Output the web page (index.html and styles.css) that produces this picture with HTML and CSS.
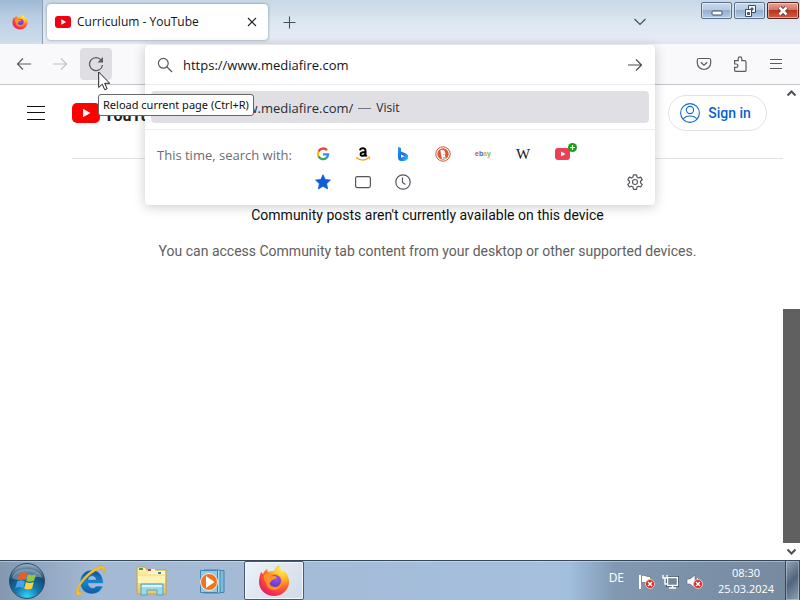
FILE: index.html
```html
<!DOCTYPE html>
<html lang="en">
<head>
<meta charset="utf-8">
<title>Curriculum - YouTube</title>
<link rel="stylesheet" href="styles.css">
</head>
<body>
<svg class="defs" aria-hidden="true">
  <defs>
    <radialGradient id="fire" cx=".75" cy=".15" r="1"><stop offset="0" stop-color="#fff04a"/><stop offset=".3" stop-color="#ffbc25"/><stop offset=".55" stop-color="#ff6b2c"/><stop offset=".8" stop-color="#f5304f"/><stop offset="1" stop-color="#d81d75"/></radialGradient>
    <radialGradient id="globe" cx=".6" cy=".3" r=".8"><stop offset="0" stop-color="#a04ff0"/><stop offset="1" stop-color="#5139c8"/></radialGradient>
    <radialGradient id="orb" cx=".5" cy=".95" r=".9"><stop offset="0" stop-color="#35d4f5"/><stop offset=".4" stop-color="#1275ac"/><stop offset=".75" stop-color="#174870"/><stop offset="1" stop-color="#8fa9bd"/></radialGradient>
    <linearGradient id="bing" x1="0" y1="0" x2="1" y2="1"><stop offset="0" stop-color="#2a9ff0"/><stop offset=".5" stop-color="#1a6fe0"/><stop offset="1" stop-color="#35d8ef"/></linearGradient>
    <linearGradient id="ie" x1="0" y1="0" x2="0" y2="1"><stop offset="0" stop-color="#164c93"/><stop offset=".5" stop-color="#1b83cd"/><stop offset="1" stop-color="#11589f"/></linearGradient>
    <linearGradient id="folder" x1="0" y1="0" x2="0" y2="1"><stop offset="0" stop-color="#fff3ad"/><stop offset="1" stop-color="#e8c962"/></linearGradient>
    <symbol id="firefox" viewBox="0 0 32 32">
      <path fill="url(#fire)" d="M3 7l2 2c1-2 2-4 4-5l1 3c2-1 4-1 6-1 1-3 3-5 5-6 0 3 2 4 4 6 1 0 2 1 3 2 2 3 3 6 3 9 0 8-7 14-15 14S1 25 1 17c0-4 1-7 2-10z"/>
      <circle cx="16" cy="17" r="8" fill="#ff8b25"/>
      <circle cx="17" cy="16" r="6" fill="url(#globe)"/>
      <path fill="#ff922b" d="M6 10c3-2 6-1 8 1 2 0 4 0 5 1-1 2-3 2-5 3-1 2-2 3-4 4-3-1-5-5-4-9z"/>
    </symbol>
    <symbol id="bad" viewBox="0 0 10 10"><circle cx="5" cy="5" r="4.5" fill="#d52a25" stroke="#f2c3bd"/><path d="M3 3l4 4M7 3L3 7" stroke="#fff" stroke-width="1.5"/></symbol>
  </defs>
</svg>

<header class="titlebar">
  <div class="pinned"><svg width="16" height="16"><use href="#firefox"/></svg></div>
  <div class="tab">
    <svg width="16" height="16" viewBox="0 0 16 16"><rect y="2" width="16" height="12" rx="3" fill="#f00013"/><path d="M6.3 5.2l4.8 2.8-4.8 2.8z" fill="#fff"/></svg>
    <span class="tab-title">Curriculum - YouTube</span>
    <button class="plain close-tab" aria-label="Close tab"><svg width="16" height="16" viewBox="0 0 16 16"><path d="M4 4l8 8M12 4l-8 8" stroke="#222" stroke-width="1.1"/></svg></button>
  </div>
  <button class="plain" aria-label="New tab"><svg width="16" height="16" viewBox="0 0 16 16"><path d="M8.500 2.500v12M2.500 8.500h12" stroke="#45505c" stroke-width="1.1"/></svg></button>
  <button class="plain all-tabs" aria-label="List all tabs"><svg width="16" height="16" viewBox="0 0 16 16"><path d="M2.500 5l5.500 5.500L13.500 5" fill="none" stroke="#45505c" stroke-width="1.2"/></svg></button>
  <div class="window-buttons">
    <button aria-label="Minimize"><svg width="16" height="14" viewBox="0 0 16 14"><rect x="3" y="7" width="10" height="4" rx="1" fill="#fff" stroke="#3b4c66"/></svg></button>
    <button aria-label="Restore"><svg width="16" height="14" viewBox="0 0 16 14"><path d="M6.500 1.500h7v7h-7z" fill="#fff" stroke="#3b4c66"/><path d="M9 4h2v2H9z" fill="#7893b5" stroke="#3b4c66"/><path d="M3.500 5.500h6v7h-6z" fill="#fff" stroke="#3b4c66"/><path d="M5.500 8.500h2v2h-2z" fill="#7893b5" stroke="#3b4c66"/></svg></button>
    <button class="win-close" aria-label="Close"><svg width="16" height="14" viewBox="0 0 16 14"><path d="M4.500 3.500l7 7M11.500 3.500l-7 7" stroke="#5d332f" stroke-width="4.500"/><path d="M4.500 3.500l7 7M11.500 3.500l-7 7" stroke="#fff" stroke-width="2.600"/></svg></button>
  </div>
</header>

<nav class="toolbar">
  <button class="tool" aria-label="Back"><svg width="16" height="16" viewBox="0 0 16 16"><path d="M15 8H1.500M7 2.500L1.500 8 7 13.500" fill="none" stroke="#5b5b66" stroke-width="1.200"/></svg></button>
  <button class="tool" aria-label="Forward" disabled><svg width="16" height="16" viewBox="0 0 16 16"><path d="M1 8h13.500M9 2.500l5.500 5.500L9 13.500" fill="none" stroke="#c2c2c8" stroke-width="1.200"/></svg></button>
  <button class="tool hovered" aria-label="Reload"><svg width="16" height="16" viewBox="0 0 16 16"><path d="M13.200 4.200A6.500 6.500 0 1 0 14.500 9" fill="none" stroke="#5b5b66" stroke-width="1.300"/><path d="M15 1v5.500H9.500z" fill="#5b5b66"/></svg></button>
  <div class="tools-end">
    <button class="tool" aria-label="Save to Pocket"><svg width="16" height="16" viewBox="0 0 16 16"><path d="M3 2.500h10a1.700 1.700 0 0 1 1.700 1.700v2.600a6.700 6.700 0 0 1-13.400 0V4.200A1.700 1.700 0 0 1 3 2.500z" fill="none" stroke="#5b5b66" stroke-width="1.200"/><path d="M4.800 6.200L8 9.200l3.200-3" fill="none" stroke="#5b5b66" stroke-width="1.300"/></svg></button>
    <button class="tool" aria-label="Extensions"><svg width="16" height="16" viewBox="0 0 16 16"><path d="M2.600 4.600h3.600V2.700a1.800 1.800 0 0 1 3.600 0v1.900h2.600a1.600 1.600 0 0 1 1.600 1.600v8.200a1 1 0 0 1-1 1H3.600a1 1 0 0 1-1-1v-3h1.600a1.700 1.700 0 0 0 0-3.400H2.600z" fill="none" stroke="#5b5b66" stroke-width="1.200"/></svg></button>
    <button class="tool" aria-label="Open application menu"><svg width="16" height="16" viewBox="0 0 16 16"><path d="M2 3.500h12M2 7.500h12M2 12.500h12" stroke="#5b5b66" stroke-width="1"/></svg></button>
  </div>
</nav>

<div class="viewport">
  <main class="page">
    <div class="masthead">
      <button class="plain guide" aria-label="Guide"><svg width="20" height="20" viewBox="0 0 20 20"><path d="M1 3.500h18M1 9.500h18M1 16.500h18" stroke="#0f0f0f"/></svg></button>
      <div class="masthead-main">
        <a class="logo" href="#"><svg width="28" height="20" viewBox="0 0 28 20"><rect width="28" height="20" rx="5" fill="#f00"/><path d="M11 5.700l7.400 4.300-7.400 4.300z" fill="#fff"/></svg><span>YouTube</span></a>
        <a class="sign-in" href="#"><svg width="20" height="20" viewBox="0 0 20 20"><g fill="none" stroke="#1668cf" stroke-width="1.100"><circle cx="10" cy="10" r="9.400"/><circle cx="10" cy="7" r="3.600"/><path d="M3 16.200c3-4.300 11-4.300 14 0"/></g></svg><span>Sign in</span></a>
      </div>
    </div>
    <section class="message">
      <h1>Community posts aren't currently available on this device</h1>
      <p>You can access Community tab content from your desktop or other supported devices.</p>
    </section>
  </main>
  <div class="scrollbar" aria-hidden="true">
    <svg width="17" height="17" viewBox="0 0 17 17"><path d="M4.500 10.500l4-4 4 4" fill="none" stroke="#505050" stroke-width="2"/></svg>
    <div class="track"><div class="thumb"></div></div>
    <svg width="17" height="17" viewBox="0 0 17 17"><path d="M4.500 6.500l4 4 4-4" fill="none" stroke="#505050" stroke-width="2"/></svg>
  </div>
</div>

<form class="urlbar">
  <div class="url-input">
    <svg width="16" height="16" viewBox="0 0 16 16"><circle cx="6.300" cy="6.300" r="4.900" fill="none" stroke="#55555e" stroke-width="1.200"/><path d="M10 10l5 5" stroke="#55555e" stroke-width="1.300"/></svg>
    <input type="text" aria-label="Search or enter address" value="https://www.mediafire.com">
    <button type="button" class="plain" aria-label="Go"><svg width="16" height="16" viewBox="0 0 16 16"><path d="M1 8h13.500M9 2.500l5.500 5.500L9 13.500" fill="none" stroke="#4b4b54" stroke-width="1.200"/></svg></button>
  </div>
  <div class="results"><a class="result" href="#"><span>https://www.mediafire.com/</span><span class="dash"></span><span class="action">Visit</span></a></div>
  <div class="one-offs">
    <span class="one-offs-label">This time, search with:</span>
    <div class="engines">
      <button type="button" aria-label="Google"><svg width="16" height="16" viewBox="0 0 16 16"><g fill="none" stroke-width="2.300"><path d="M12 4.300A5 5 0 0 0 3.500 5.700" stroke="#e94335"/><path d="M3.500 5.700a5 5 0 0 0 0 4.700" stroke="#fbbc05"/><path d="M3.500 10.300a5 5 0 0 0 7.900 1.600" stroke="#34a853"/><path d="M11.400 11.900a5 5 0 0 0 1.700-3.500H8" stroke="#4285f4"/></g></svg></button>
      <button type="button" aria-label="Amazon"><svg width="16" height="16" viewBox="0 0 16 16"><path d="M5 4.300C5.400 1.700 10.500 1.200 10.500 4.700v4.500l1.200 1.200M10.300 5.900C7 5.900 5.200 6.900 5.600 8.700c.4 1.900 4.200 1.300 4.900-1.300" fill="none" stroke="#000" stroke-width="2"/><path d="M1 11.500c4 3 9 3 12.500.5" fill="none" stroke="#f0a019" stroke-width="1.300"/><path d="M12.500 11h2.300l-.7 2.200" fill="none" stroke="#f0a019"/></svg></button>
      <button type="button" aria-label="Bing"><svg width="16" height="16" viewBox="0 0 16 16"><path fill-rule="evenodd" d="M3 .8l3 1.100v3.600l5 2q2.400 1.200 2.300 3.500 0 2.500-2.300 3.500-2.500 1-4.500.8-3.500-.5-3.500-3.500zM6 8.500v3.300l3.500-1.500z" fill="url(#bing)"/></svg></button>
      <button type="button" aria-label="DuckDuckGo"><svg width="16" height="16" viewBox="0 0 16 16"><circle cx="8" cy="8" r="7.200" fill="#fff" stroke="#d85335"/><circle cx="8" cy="8" r="5.700" fill="#dd5734"/><path d="M5.300 4.300c2.200-1.400 5 0 5 2.900l-.3 1.600.6 3.900-3.600.6z" fill="#fff"/><path d="M8 8.200l3 .2-2.800 1z" fill="#f7ba2a"/><path d="M8 11l2.500.8-2 .9z" fill="#5eb34b"/></svg></button>
      <button type="button" aria-label="eBay" class="ebay"><span class="e">e</span><span class="b">b</span><span class="a">a</span><span class="y">y</span></button>
      <button type="button" aria-label="Wikipedia" class="wiki">W</button>
      <button type="button" aria-label="YouTube" class="youtube"><svg width="16" height="16" viewBox="0 0 16 16"><rect y="2" width="15" height="12" rx="3" fill="#ed4056"/><path d="M6 5.500l4.500 2.500L6 10.500z" fill="#fff"/></svg><svg class="plus" width="9" height="9" viewBox="0 0 9 9"><circle cx="4.500" cy="4.500" r="4.500" fill="#16a316"/><path d="M4.500 2v5M2 4.500h5" stroke="#fff" stroke-width="1.200"/></svg></button>
      <button type="button" aria-label="Bookmarks"><svg width="16" height="16" viewBox="0 0 16 16"><path d="M8 .8l2.200 4.700 5.200.6-3.800 3.600 1 5.200L8 12.300l-4.600 2.600 1-5.200L.6 6.100l5.200-.6z" fill="#0b5ddd" stroke="#0b5ddd" stroke-linejoin="round" stroke-width=".8"/></svg></button>
      <button type="button" aria-label="Tabs"><svg width="16" height="16" viewBox="0 0 16 16"><rect x=".6" y="2.600" width="14.800" height="11" rx="1.800" fill="none" stroke="#55555e" stroke-width="1.200"/></svg></button>
      <button type="button" aria-label="History"><svg width="16" height="16" viewBox="0 0 16 16"><circle cx="8" cy="8" r="7.200" fill="none" stroke="#55555e" stroke-width="1.200"/><path d="M7.500 3.500v5l3 2" fill="none" stroke="#55555e" stroke-width="1.200"/></svg></button>
    </div>
    <button type="button" class="plain settings" aria-label="Search settings"><svg width="16" height="16" viewBox="0 0 16 16"><path d="M6.500 .8h3l.5 2.200 1.500.9 2.200-.8 1.500 2.600-1.700 1.500v1.700l1.700 1.500-1.500 2.600-2.200-.8-1.500.9-.5 2.200h-3L6 13.100l-1.500-.9-2.200.8-1.500-2.600 1.700-1.500V7.200L.8 5.700l1.500-2.600 2.200.8L6 3z" fill="none" stroke="#55555e" stroke-width="1.200" stroke-linejoin="round"/><circle cx="8" cy="8" r="2.500" fill="none" stroke="#55555e" stroke-width="1.100"/></svg></button>
  </div>
</form>

<div class="tooltip" role="tooltip">Reload current page (Ctrl+R)</div>
<svg class="cursor" width="13" height="20" viewBox="0 0 13 20" aria-hidden="true"><path d="M.7 1v15.500l3.600-3.300 2.400 5.500 2.400-1-2.400-5.400h5z" fill="#fff" stroke="#222"/></svg>

<footer class="taskbar">
  <button class="task start" aria-label="Start"><svg width="38" height="38" viewBox="0 0 38 38"><circle cx="19" cy="19" r="17.500" fill="url(#orb)" stroke="#2c4c6a"/><path d="M4 16C6 4 32 4 34 16 25 12 14 22 4 16z" fill="#fff" opacity=".3"/><path d="M11.500 11.500c3-1.700 5-1.500 7.500.2l-1.700 6.600c-2.500-1.500-4.800-1.600-7.700-.2z" fill="#ee5b25"/><path d="M20 12.200c2.500 1.500 5 1.500 8 0l-1.900 6.500c-2.800 1.500-5.400 1.500-7.800.1z" fill="#8fc83e"/><path d="M9.200 19.300c2.900-1.400 5.300-1.300 7.700.2L15.200 26c-2.600-1.500-4.900-1.400-7.800 0z" fill="#42a5e8"/><path d="M18 20c2.500 1.300 5 1.300 7.800 0L24 26.400c-2.800 1.500-5.300 1.500-7.800 0z" fill="#fbd13d"/></svg></button>
  <button class="task" aria-label="Internet Explorer"><svg width="34" height="34" viewBox="0 0 34 34"><path fill-rule="evenodd" d="M17.500 6C24 6 29 10 29.500 19.500H14.500c.3 5 5.500 5.500 7.500 2.500h7C26.500 28 22.500 30 17.500 30 11 30 6 25 6 18S11 6 17.500 6zM14.500 15.500h7.200c-.5-4.500-6.500-4.500-7.200 0z" fill="url(#ie)" stroke="#86cdf2" stroke-width=".6"/><path d="M3 31C-2 25 15 4 27 2c4-.5 5 2 3 7 0-4-1-5-4-4C16 8 2 24 5 28c1 1 3 0 5-1-3 3-5 5-7 4z" fill="#f5c12c" stroke="#d29b20" stroke-width=".4"/></svg></button>
  <button class="task" aria-label="Windows Explorer"><svg width="34" height="34" viewBox="0 0 34 34"><path d="M2 3h8l2 3h19v24H2z" fill="url(#folder)" stroke="#c3a345"/><path d="M4 4h4v2H4z" fill="#439b55"/><path d="M13 5h7v2h10v3H13z" fill="#fff7c7"/><path d="M13 5h3v2h-3z" fill="#c64434"/><path d="M23 8h3v2h-3z" fill="#3889ba"/><path d="M3 12h27v7H3z" fill="#fff2b2"/><path d="M6 20h22v11h-6v-5H12v5H6z" fill="#9bd9ee" stroke="#589fba"/><path d="M7 21h20v2H7z" fill="#daf5fa"/></svg></button>
  <button class="task" aria-label="Windows Media Player"><svg width="34" height="34" viewBox="0 0 34 34"><path d="M11 6.500h17v22H11z" fill="#7dbbdc" stroke="#4386ad"/><path d="M8 6h16v23H8z" fill="#aedaee" stroke="#4386ad"/><path d="M4.500 6.500h17v22h-17z" fill="#91c9e6" stroke="#4386ad"/><circle cx="13" cy="18" r="8.500" fill="#ed7421" stroke="#fff0df"/><path d="M10 12l8.500 6-8.500 6z" fill="#fff"/></svg></button>
  <button class="task active" aria-label="Firefox"><svg width="32" height="32"><use href="#firefox"/></svg></button>
  <div class="tray">
    <span class="lang">DE</span>
    <div class="tray-icons">
      <svg width="17" height="17" viewBox="0 0 17 17"><path d="M2 2v14" stroke="#fff" stroke-width="2"/><path d="M3.500 2.500c4-1 5 2 9 1v7c-4 1-5-2-9-1z" fill="#fff" stroke="#53687c" stroke-width=".6"/><use href="#bad" x="7" y="6" width="10" height="10"/></svg>
      <svg width="17" height="17" viewBox="0 0 17 17"><path d="M5.500 4.500h10v8h-10z" fill="#63798f" stroke="#344454" stroke-width="3"/><path d="M5.500 4.500h10v8h-10zM7 15h7M10.500 12v3" fill="#71879b" stroke="#fff" stroke-width="1.400"/><path d="M1 2v3h4V2M3 5v6h3" fill="none" stroke="#fff" stroke-width="1.400"/></svg>
      <svg width="17" height="17" viewBox="0 0 17 17"><path d="M1 6h3l5-4v13l-5-4H1z" fill="#fff" stroke="#53687c" stroke-width=".6"/><path d="M11 5c2 2 2 5 0 7" fill="none" stroke="#fff"/><use href="#bad" x="7" y="6" width="10" height="10"/></svg>
    </div>
    <div class="clock"><span>08:30</span><span>25.03.2024</span></div>
    <button class="show-desktop" aria-label="Show desktop"></button>
  </div>
</footer>
</body>
</html>
```
FILE: styles.css
```css
* { box-sizing: border-box; }

body {
  margin: 0;
  height: 100vh;
  display: flex;
  flex-direction: column;
  overflow: hidden;
  background: #fff;
  color: #15141a;
  font: 12px/16px "Open Sans", "Noto Sans", sans-serif;
}

button { padding: 0; border: 0; background: none; color: inherit; font: inherit; }
svg { display: block; flex: none; }
a { color: inherit; text-decoration: none; }
.defs { position: absolute; width: 0; height: 0; }
.plain { display: flex; flex: none; }

/* Window title bar */
.titlebar {
  flex: none;
  height: 44px;
  display: flex;
  align-items: center;
  background: linear-gradient(#c8d8e7, #dce7f1 50%, #e5ecf6 85%, #dfe6ef);
}
.pinned {
  align-self: stretch;
  width: 43px;
  padding-right: 3px;
  display: grid;
  place-items: center;
  background: linear-gradient(#9eb9d5, #b9cee3 40%, #d0deed);
  border-right: 1px solid #8e9eb0;
}
.tab {
  width: 221px;
  height: 36px;
  margin: 0 13px 0 4px;
  padding: 0 8px;
  display: flex;
  align-items: center;
  gap: 6px;
  background: #fff;
  border-radius: 4px;
  box-shadow: 0 0 3px rgba(50, 65, 85, .55);
}
.tab-title { flex: 1; white-space: nowrap; }
.all-tabs { margin-left: auto; }
.window-buttons {
  align-self: flex-start;
  margin: 2px 1px 0 53px;
  display: flex;
  gap: 2px;
}
.window-buttons button {
  width: 31px;
  height: 17px;
  display: grid;
  place-items: center;
  border: 1px solid #5b708c;
  border-radius: 2px;
  background: linear-gradient(#ccdaea, #b4c8df 48%, #93afd0 50%, #b4cce4);
  box-shadow: inset 0 0 0 1px rgba(255, 255, 255, .45);
}
.window-buttons .win-close {
  width: 32px;
  border-color: #5c241c;
  background: linear-gradient(#e5a394, #d27361 48%, #ba341f 50%, #d26044);
}

/* Navigation toolbar */
.toolbar {
  flex: none;
  height: 41px;
  padding: 0 8px;
  display: flex;
  align-items: center;
  gap: 4px;
  background: #f9f9fb;
  border-bottom: 1px solid #c6c6ca;
}
.tool {
  width: 32px;
  height: 32px;
  display: grid;
  place-items: center;
  border-radius: 4px;
}
.hovered { background: #dfdfe3; }
.tools-end { margin-left: auto; display: flex; gap: 4px; }

/* Web page */
.viewport { flex: 1; min-height: 0; display: flex; }
.page { flex: 1; min-width: 0; font-family: Roboto, sans-serif; }
.masthead { display: flex; padding-left: 26px; }
.guide { width: 46px; padding-top: 18px; }
.masthead-main {
  flex: 1;
  height: 74px;
  padding: 10px 16px 0 0;
  display: flex;
  align-items: flex-start;
  justify-content: space-between;
  border-bottom: 1px solid #e2e2e2;
}
.logo {
  height: 36px;
  display: flex;
  align-items: center;
  gap: 4px;
  font: bold 16px/24px Roboto, sans-serif;
  color: #212121;
}
.logo span { padding-top: 6px; }
.sign-in {
  width: 99px;
  height: 36px;
  display: flex;
  align-items: center;
  justify-content: center;
  gap: 8px;
  padding-right: 4px;
  border: 1px solid #e2e2e2;
  border-radius: 18px;
  color: #065fd4;
  font-size: 14px;
  font-weight: 500;
}
.message { padding: 46px 0 0 72px; text-align: center; }
.message h1, .message p { margin: 0; font-size: 14px; line-height: 20px; font-weight: 400; }
.message h1 { color: #0f0f0f; }
.message p { margin-top: 16px; color: #606060; }

.scrollbar { width: 17px; display: flex; flex-direction: column; }
.track { flex: 1; display: flex; flex-direction: column; justify-content: flex-end; }
.thumb { height: 53%; background: #606060; }

/* Address bar, opened over the page */
.urlbar {
  position: absolute;
  top: 45px;
  left: 145px;
  right: 145px;
  background: #fff;
  border-radius: 4px;
  box-shadow: 0 2px 12px rgba(40, 40, 50, .24);
}
.url-input {
  height: 39px;
  padding: 0 12px;
  display: flex;
  align-items: center;
  gap: 10px;
}
.url-input input {
  flex: 1;
  min-width: 0;
  padding: 0;
  border: 0;
  outline: 0;
  background: none;
  color: #15141a;
  font: 13px/20px "Open Sans", sans-serif;
}
.results {
  padding: 6px;
  border-top: 1px solid #ececef;
  border-bottom: 1px solid #ececef;
}
.result {
  height: 32px;
  padding: 2px 0 0 32px;
  display: flex;
  align-items: center;
  gap: 5px;
  border-radius: 4px;
  background: #e0e0e4;
  color: #2c2935;
  font-size: 13px;
}
.dash { width: 13px; border-top: 1px solid #74747c; }
.action { font-size: 12px; }
.one-offs {
  padding: 10px 12px 9px;
  display: flex;
  align-items: flex-end;
}
.one-offs-label {
  width: 146px;
  align-self: flex-start;
  padding-top: 7px;
  color: #6c6c74;
  font-size: 13px;
  white-space: nowrap;
}
.engines { flex: 1; display: grid; grid-template-columns: repeat(7, 40px); }
.engines button { height: 28px; display: flex; align-items: center; justify-content: center; }
.engines .ebay { font: bold 7px/16px "Liberation Sans", sans-serif; }
.ebay .e { color: #d84752; }
.ebay .b { color: #3d68b0; }
.ebay .a { color: #e2ae2f; }
.ebay .y { color: #88b444; }
.engines .wiki { font: 15px/16px "Liberation Serif", serif; }
.youtube { position: relative; }
.plus { position: absolute; top: 3px; right: 6px; }
.settings { padding-bottom: 6px; }

.tooltip {
  position: absolute;
  top: 94px;
  left: 98px;
  padding: 2px 4px;
  border: 1px solid #666;
  border-radius: 3px;
  background: #fff;
  color: #111;
  font-family: "Noto Sans", sans-serif;
  font-size: 11px;
  white-space: nowrap;
}
.cursor { position: absolute; top: 71px; left: 98px; }

/* Desktop taskbar */
.taskbar {
  flex: none;
  height: 40px;
  display: flex;
  gap: 1px;
  border-top: 1px solid #35475b;
  box-shadow: inset 0 1px rgba(255, 255, 255, .35);
  background: linear-gradient(90deg, #8498b2, #a4b9d3 12%, #a5bfdd 70%, #a1bfdf 71%, #8198b1 77%, #75899e);
}
.task { width: 60px; display: grid; place-items: center; }
.start { width: 54px; margin-right: 6px; }
.active {
  border: 1px solid #465a73;
  border-radius: 2px;
  background: linear-gradient(135deg, #edf2f8, #cfdbe8);
  box-shadow: inset 0 0 0 1px #f5f8fb;
}
.tray { margin-left: auto; display: flex; color: #fff; }
.lang { padding-top: 9px; margin-right: 14px; }
.tray-icons { display: flex; gap: 7px; padding-top: 12px; }
.clock {
  width: 82px;
  padding: 4px 0 0 4px;
  display: flex;
  flex-direction: column;
  text-align: center;
  font-size: 11px;
}
.show-desktop {
  width: 15px;
  border: 1px solid #35475b;
  border-width: 0 1px;
  background: linear-gradient(135deg, #93a5b7, #50657c 50%, #8fa3b6);
  box-shadow: inset 0 0 0 1px rgba(255, 255, 255, .3);
}
```
